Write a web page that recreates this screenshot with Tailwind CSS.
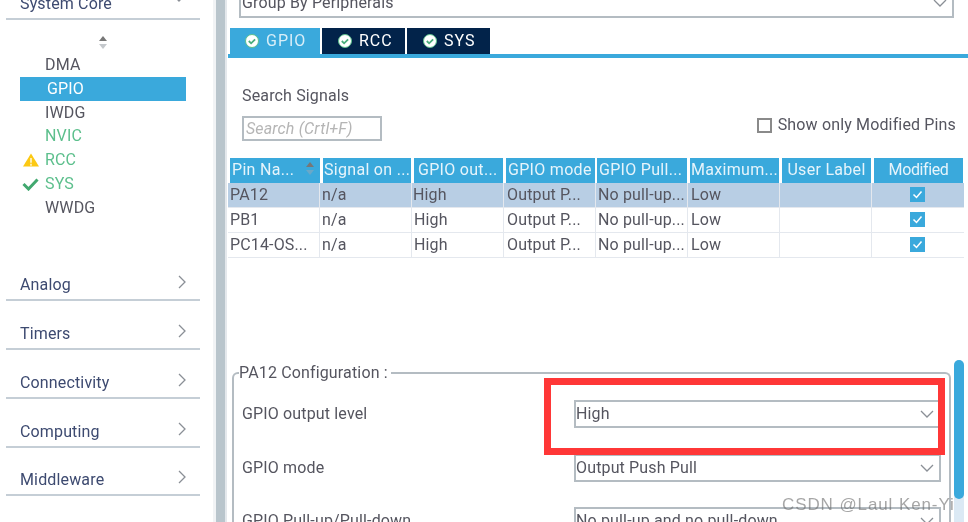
<!DOCTYPE html>
<html lang="en">
<head>
    <meta charset="UTF-8">
    <title>Pinout Configuration</title>
    <script src="https://cdn.jsdelivr.net/npm/@tailwindcss/browser@4"></script>
</head>
<body class="bg-white">
<div class="relative flex h-[522px] w-[968px] overflow-hidden bg-white font-['Roboto',sans-serif] text-[16px] tracking-[0.15px] text-[#55555f] blur-[0.35px]">

    <!-- Categories -->
    <aside class="w-[213px] shrink-0 -mt-[28px] pl-[6px] pr-[13px]">
        <div class="flex h-[48px] items-end justify-between border-b-2 border-[#c5ced6] pl-[14px] pr-[14px] pb-[2px] text-[#3d4a70]">
            <span class="leading-[24px]">System Core</span>
            <svg class="mb-[14px]" width="14" height="8" viewBox="0 0 14 8" fill="none" stroke="#8a8f96" stroke-width="1.3"><path d="M1 1l6 6 6-6"/></svg>
        </div>

        <div class="h-[232.5px] pl-[14px] pr-[14px]">
            <div class="flex h-[29px] items-end justify-center">
                <svg width="10" height="13" viewBox="0 0 10 13"><path d="M5 0l4 5H1z" fill="#777"/><path d="M5 13L1 8h8z" fill="#c4c8cc"/></svg>
            </div>
            <ul class="mt-[4px] leading-[23.75px]">
                <li class="pl-[25px]">DMA</li>
                <li class="bg-[#3aa9dc] pl-[27px] text-white">GPIO</li>
                <li class="pl-[25px]">IWDG</li>
                <li class="pl-[25px] text-[#5cbf8c]">NVIC</li>
                <li class="relative pl-[25px] text-[#5cbf8c]">
                    <svg class="absolute left-[3px] top-[5px]" width="16" height="14" viewBox="0 0 17 14"><path d="M8.5 0L17 14H0z" fill="#fcc913"/><path d="M8.5 5v5M8.5 11v2" stroke="#fff" stroke-width="1.4"/></svg>
                    RCC
                </li>
                <li class="relative pl-[25px] text-[#5cbf8c]">
                    <svg class="absolute left-[2px] top-[6px]" width="17" height="13" viewBox="0 0 17 13" fill="none" stroke="#41a86f" stroke-width="3"><path d="M1.5 6l5 5 9-9.5"/></svg>
                    SYS
                </li>
                <li class="pl-[25px]">WWDG</li>
            </ul>
        </div>

        <div class="flex h-[48.75px] items-end justify-between border-b-2 border-[#c5ced6] pl-[14px] pr-[14px] pb-[2px] text-[#3d4a70]">
            <span class="leading-[24px]">Analog</span>
            <svg class="mb-[8px]" width="8" height="14" viewBox="0 0 8 14" fill="none" stroke="#8a8f96" stroke-width="1.3"><path d="M1 1l6 6-6 6"/></svg>
        </div>
        <div class="flex h-[48.75px] items-end justify-between border-b-2 border-[#c5ced6] pl-[14px] pr-[14px] pb-[2px] text-[#3d4a70]">
            <span class="leading-[24px]">Timers</span>
            <svg class="mb-[8px]" width="8" height="14" viewBox="0 0 8 14" fill="none" stroke="#8a8f96" stroke-width="1.3"><path d="M1 1l6 6-6 6"/></svg>
        </div>
        <div class="flex h-[48.75px] items-end justify-between border-b-2 border-[#c5ced6] pl-[14px] pr-[14px] pb-[2px] text-[#3d4a70]">
            <span class="leading-[24px]">Connectivity</span>
            <svg class="mb-[8px]" width="8" height="14" viewBox="0 0 8 14" fill="none" stroke="#8a8f96" stroke-width="1.3"><path d="M1 1l6 6-6 6"/></svg>
        </div>
        <div class="flex h-[48.75px] items-end justify-between border-b-2 border-[#c5ced6] pl-[14px] pr-[14px] pb-[2px] text-[#3d4a70]">
            <span class="leading-[24px]">Computing</span>
            <svg class="mb-[8px]" width="8" height="14" viewBox="0 0 8 14" fill="none" stroke="#8a8f96" stroke-width="1.3"><path d="M1 1l6 6-6 6"/></svg>
        </div>
        <div class="flex h-[48.75px] items-end justify-between border-b-2 border-[#c5ced6] pl-[14px] pr-[14px] pb-[2px] text-[#3d4a70]">
            <span class="leading-[24px]">Middleware</span>
            <svg class="mb-[8px]" width="8" height="14" viewBox="0 0 8 14" fill="none" stroke="#8a8f96" stroke-width="1.3"><path d="M1 1l6 6-6 6"/></svg>
        </div>
    </aside>

    <!-- Splitter -->
    <div class="w-[3px] shrink-0 bg-[#f1f3f5]"></div>
    <div class="w-[9px] shrink-0 bg-[#b9c5cc]"></div>
    <div class="w-[2px] shrink-0 bg-[#e4e8ec]"></div>

    <main class="relative min-w-0 flex-1">
        <!-- Group select, cut by the top edge -->
        <div class="ml-[12px] mr-[14px] -mt-[10px] flex h-[28px] items-center justify-between border-2 border-t-0 border-[#b4bcc2] pl-[1px] pr-[5px]">
            <span>Group By Peripherals</span>
            <svg width="14" height="8" viewBox="0 0 14 8" fill="none" stroke="#8a8f96" stroke-width="1.3"><path d="M1 1l6 6 6-6"/></svg>
        </div>

        <!-- Tabs -->
        <div class="mt-[10px] flex h-[26px] gap-[2px] pl-[3px] tracking-[1px] text-white">
            <div class="flex w-[90px] items-center gap-[7px] bg-[#3aa9dc] pl-[15px] text-[#d8eef8]">
                <svg width="14" height="14" viewBox="0 0 14 14"><circle cx="7" cy="7" r="6.5" fill="#fff" stroke="#5cbf8c"/><path d="M3.8 7l2.3 2.3 4-4" fill="none" stroke="#4aad7c" stroke-width="1.8"/></svg>
                GPIO
            </div>
            <div class="flex w-[83px] items-center gap-[7px] bg-[#02234a] pl-[16px]">
                <svg width="14" height="14" viewBox="0 0 14 14"><circle cx="7" cy="7" r="6.5" fill="#fff" stroke="#5cbf8c"/><path d="M3.8 7l2.3 2.3 4-4" fill="none" stroke="#4aad7c" stroke-width="1.8"/></svg>
                RCC
            </div>
            <div class="flex w-[83px] items-center gap-[7px] bg-[#02234a] pl-[16px]">
                <svg width="14" height="14" viewBox="0 0 14 14"><circle cx="7" cy="7" r="6.5" fill="#fff" stroke="#5cbf8c"/><path d="M3.8 7l2.3 2.3 4-4" fill="none" stroke="#4aad7c" stroke-width="1.8"/></svg>
                SYS
            </div>
        </div>
        <div class="ml-[1px] h-[4px] bg-[#3aa9dc]"></div>

        <!-- Search -->
        <div class="flex h-[100px] justify-between pl-[15px] pr-[12px]">
            <div class="pt-[26px]">
                <div class="leading-[24px]">Search Signals</div>
                <div class="mt-[8px] flex h-[25px] w-[140px] items-center border-2 border-[#b4bcc2] pl-[2px] italic text-[#b5b5b5]">Search (Crtl+F)</div>
            </div>
            <label class="mt-[55px] flex h-[24px] items-center gap-[6px]">
                <span class="h-[15px] w-[15px] border-2 border-[#8a8a8a]"></span>
                Show only Modified Pins
            </label>
        </div>

        <!-- Pin table -->
        <div class="ml-[1px] w-[736px]">
            <div class="grid h-[25px] grid-cols-[92px_92px_92px_92px_92px_92px_92px_92px] tracking-[0.3px] text-[#e6f4fb]">
                <div class="relative ml-[2px] truncate bg-[#3aa9dc] pl-[2px] leading-[24px]">Pin Na...
                    <svg class="absolute right-[5px] top-[4px]" width="10" height="13" viewBox="0 0 10 13"><path d="M5 0l4 5H1z" fill="#777"/><path d="M5 13L1 8h8z" fill="#6aa8c8"/></svg>
                </div>
                <div class="ml-[3px] mr-[1px] bg-[#3aa9dc] pl-[1px] leading-[24px]">Signal on ...</div>
                <div class="ml-[2px] mr-[1px] bg-[#3aa9dc] pl-[4px] leading-[24px]">GPIO out...</div>
                <div class="ml-[2px] mr-[1px] bg-[#3aa9dc] pl-[2px] leading-[24px]">GPIO mode</div>
                <div class="mx-[1px] bg-[#3aa9dc] pl-[2px] leading-[24px]">GPIO Pull...</div>
                <div class="ml-[2px] mr-[1px] bg-[#3aa9dc] pl-[1px] leading-[24px]">Maximum...</div>
                <div class="ml-[2px] mr-[1px] bg-[#3aa9dc] text-center leading-[24px]">User Label</div>
                <div class="ml-[2px] mr-[1px] bg-[#3aa9dc] text-center leading-[24px] tracking-[-0.4px]">Modified</div>
            </div>
            <div class="grid h-[25px] grid-cols-[92px_92px_92px_92px_92px_92px_92px_92px] divide-x divide-[#e4e8ee] border-b border-[#e4e8ee] bg-[#b8cee4] leading-[24px]">
                <div class="pl-[2px]">PA12</div><div class="pl-[2px]">n/a</div><div class="pl-[1px]">High</div><div class="pl-[3px]">Output P...</div><div class="pl-[2px]">No pull-up...</div><div class="pl-[3px]">Low</div><div></div>
                <div class="flex items-center justify-center pr-[2px] pb-[2px]"><svg width="15" height="15" viewBox="0 0 15 15"><rect width="15" height="15" fill="#3aa9dc"/><path d="M3.5 7.5l3 3 5-6" fill="none" stroke="#fff" stroke-width="1.5"/></svg></div>
            </div>
            <div class="grid h-[25px] grid-cols-[92px_92px_92px_92px_92px_92px_92px_92px] divide-x divide-[#e4e8ee] border-b border-[#e4e8ee] leading-[24px]">
                <div class="pl-[2px]">PB1</div><div class="pl-[2px]">n/a</div><div class="pl-[2px]">High</div><div class="pl-[3px]">Output P...</div><div class="pl-[2px]">No pull-up...</div><div class="pl-[3px]">Low</div><div></div>
                <div class="flex items-center justify-center pr-[2px] pb-[2px]"><svg width="15" height="15" viewBox="0 0 15 15"><rect width="15" height="15" fill="#3aa9dc"/><path d="M3.5 7.5l3 3 5-6" fill="none" stroke="#fff" stroke-width="1.5"/></svg></div>
            </div>
            <div class="grid h-[25px] grid-cols-[92px_92px_92px_92px_92px_92px_92px_92px] divide-x divide-[#e4e8ee] border-b border-[#e4e8ee] leading-[24px]">
                <div class="pl-[2px]">PC14-OS...</div><div class="pl-[2px]">n/a</div><div class="pl-[2px]">High</div><div class="pl-[3px]">Output P...</div><div class="pl-[2px]">No pull-up...</div><div class="pl-[3px]">Low</div><div></div>
                <div class="flex items-center justify-center pr-[2px] pb-[2px]"><svg width="15" height="15" viewBox="0 0 15 15"><rect width="15" height="15" fill="#3aa9dc"/><path d="M3.5 7.5l3 3 5-6" fill="none" stroke="#fff" stroke-width="1.5"/></svg></div>
            </div>
        </div>

        <!-- Pin configuration -->
        <fieldset class="ml-[5px] mr-[17px] mt-[103px] h-[200px] rounded-tl-[6px] rounded-tr-[6px] border-2 border-b-0 border-[#b4bcc2]">
            <legend class="ml-[5px] pr-[3px] leading-[24px]">PA12 Configuration :</legend>
            <div class="pl-[8px]">
                <div class="mt-[15px] flex h-[54px] items-start">
                    <span class="w-[332px] pt-[2px] leading-[24px]">GPIO output level</span>
                    <div class="flex h-[28px] w-[367px] items-center justify-between border-2 border-[#b4bcc2] pr-[5px]">
                        <span>High</span>
                        <svg width="14" height="8" viewBox="0 0 14 8" fill="none" stroke="#8a8f96" stroke-width="1.3"><path d="M1 1l6 6 6-6"/></svg>
                    </div>
                </div>
                <div class="flex h-[53px] items-start">
                    <span class="w-[332px] pt-[2px] leading-[24px]">GPIO mode</span>
                    <div class="flex h-[28px] w-[367px] items-center justify-between border-2 border-[#b4bcc2] pr-[5px]">
                        <span>Output Push Pull</span>
                        <svg width="14" height="8" viewBox="0 0 14 8" fill="none" stroke="#8a8f96" stroke-width="1.3"><path d="M1 1l6 6 6-6"/></svg>
                    </div>
                </div>
                <div class="flex h-[28px] items-start">
                    <span class="w-[332px] pt-[2px] leading-[24px]">GPIO Pull-up/Pull-down</span>
                    <div class="flex h-[28px] w-[367px] items-center justify-between border-2 border-[#b4bcc2] pr-[5px]">
                        <span>No pull-up and no pull-down</span>
                        <svg width="14" height="8" viewBox="0 0 14 8" fill="none" stroke="#8a8f96" stroke-width="1.3"><path d="M1 1l6 6 6-6"/></svg>
                    </div>
                </div>
            </div>
        </fieldset>

        <!-- Scrollbar -->
        <div class="absolute left-[727px] top-[360px] h-[162px] w-[10px] rounded-t-full bg-[#dbe9f4]">
            <div class="h-[139px] rounded-full bg-[#3aa9dc]"></div>
        </div>
    </main>

    <!-- Annotation and watermark over the shot -->
    <div class="absolute left-[544px] top-[378px] h-[77px] w-[401px] border-[7px] border-[#ff3737]"></div>
    <div class="absolute left-[782px] top-[494px] font-['Liberation_Sans',sans-serif] text-[17px] leading-[22px] tracking-[0.9px] text-[#6b6b6b]/60">CSDN @Laul Ken-Yi</div>
</div>
</body>
</html>
